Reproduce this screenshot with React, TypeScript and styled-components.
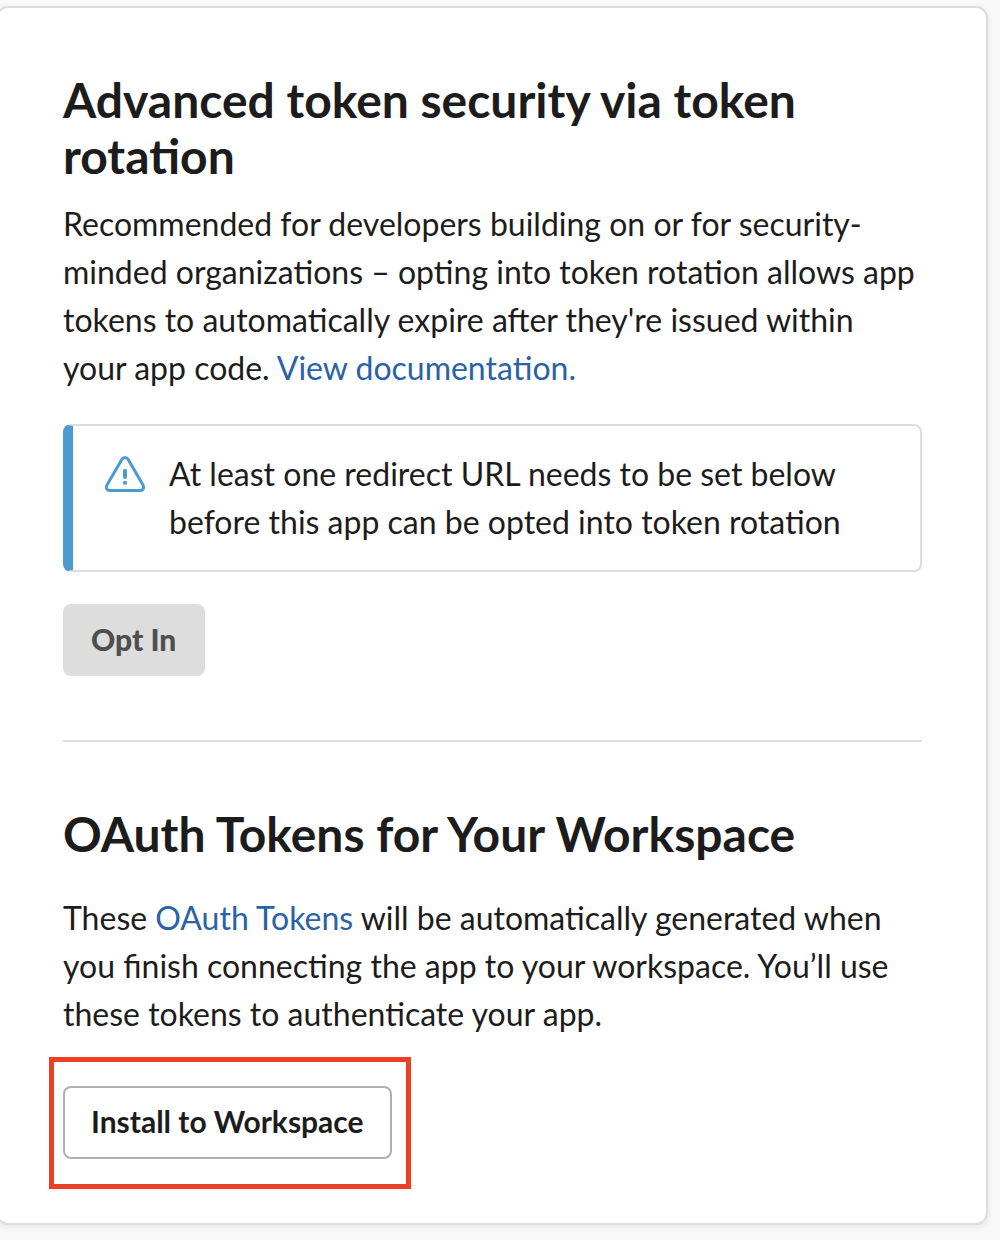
import React from "react";
import styled, { createGlobalStyle } from "styled-components";

const GlobalStyle = createGlobalStyle`
  body { margin: 0; background: #f8f8f8; font-family: Lato, "Liberation Sans", sans-serif; color: #1d1c1d; }
  *, *::before, *::after { box-sizing: border-box; }
`;
const Page = styled.main`
  height: 1240px; overflow: hidden; padding: 6px 12px 0 0;
`;
const Card = styled.article`
  height: 1219px; margin-left: -4px; padding: 64px 64px 0 65px;
  background: #fff; border: 2px solid #dddddd; border-radius: 12px;
  box-shadow: 0 2px 6px rgba(0, 0, 0, 0.08);
`;
const Heading = styled.h2`
  margin: 0; font-size: 48px; line-height: 56px; font-weight: 700; white-space: nowrap;
`;
const Copy = styled.p<{ $top: number }>`
  margin: ${(p) => p.$top}px 0 0; font-size: 32px; line-height: 48px; white-space: nowrap;
`;
const Link = styled.a`
  color: #2a62a6; text-decoration: none;
`;
const Alert = styled.div`
  display: flex; height: 148px; margin-top: 32px; padding: 24px 30px;
  border: 2px solid #dddddd; border-left: 10px solid #4b9bd1; border-radius: 8px;
`;
const AlertIcon = styled.svg`
  width: 44px; height: 44px; margin: 3px 22px 0 0; flex: none;
`;
const AlertText = styled.div`
  font-size: 32px; line-height: 48px; white-space: nowrap;
`;
const Button = styled.button<{ $outlined?: boolean }>`
  display: flex; align-items: center; justify-content: flex-start;
  width: ${(p) => (p.$outlined ? 329 : 142)}px; height: ${(p) => (p.$outlined ? 73 : 72)}px;
  padding: ${(p) => (p.$outlined ? "0 0 3px 26px" : "0 0 2px 28px")};
  border-radius: 8px; border: ${(p) => (p.$outlined ? "2px solid #b0b0b0" : "0")};
  background: ${(p) => (p.$outlined ? "#fff" : "#dddddd")};
  color: ${(p) => (p.$outlined ? "#1d1c1d" : "#4f4e4f")};
  font: ${(p) => (p.$outlined ? 700 : 900)} 30px/40px Lato, sans-serif; white-space: nowrap;
`;
const OptRow = styled.div`
  margin-top: 32px;
`;
const Divider = styled.hr`
  height: 2px; margin: 64px 0; border: 0; background: #dddddd;
`;
const Highlight = styled.div`
  width: 362px; height: 132px; margin: 19px 0 0 -14px; padding: 24px 0 0 9px;
  border: 5px solid #eb4026;
`;

export default function App() {
  return (
    <Page>
      <GlobalStyle />
      <Card>
        <section>
          <Heading>Advanced token security via token<br />rotation</Heading>
          <Copy $top={16}>
            Recommended for developers building on or for security-<br />
            minded organizations – opting into token rotation allows app<br />
            tokens to automatically expire after they're issued within<br />
            your app code. <Link>View documentation.</Link>
          </Copy>
          <Alert>
            <AlertIcon viewBox="0 0 44 44" fill="none" stroke="#4b9bd1" strokeWidth="3" strokeLinecap="round" strokeLinejoin="round">
              <path d="M18.8 6.5 4 31.9c-1.6 2.7-.1 5.6 2.8 5.6h30.4c2.9 0 4.4-2.9 2.8-5.6L25.2 6.5c-1.4-2.6-5-2.6-6.4 0Z" />
              <path d="M22 17.7V24" strokeWidth="4" />
              <circle cx="22" cy="29.8" r="2.1" fill="#4b9bd1" stroke="none" />
            </AlertIcon>
            <AlertText>At least one redirect URL needs to be set below<br />before this app can be opted into token rotation</AlertText>
          </Alert>
          <OptRow><Button disabled>Opt In</Button></OptRow>
        </section>
        <Divider />
        <section>
          <Heading>OAuth Tokens for Your Workspace</Heading>
          <Copy $top={32}>
            These <Link>OAuth Tokens</Link> will be automatically generated when<br />
            you finish connecting the app to your workspace. You’ll use<br />
            these tokens to authenticate your app.
          </Copy>
          <Highlight><Button $outlined>Install to Workspace</Button></Highlight>
        </section>
      </Card>
    </Page>
  );
}
